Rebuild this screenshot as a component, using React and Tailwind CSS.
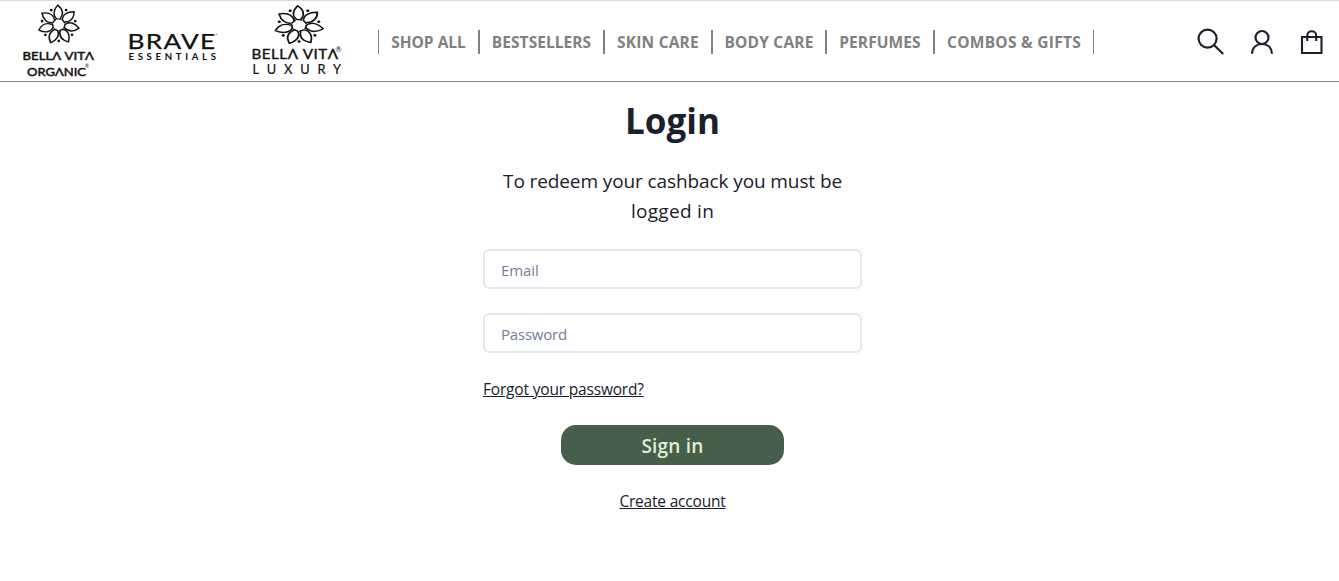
import React from "react";

function Flower({ transform }) {
  const angles = [0, 51.43, 102.86, 154.29, 205.71, 257.14, 308.57];
  return (
    <g transform={transform} fill="none" stroke="#111" strokeWidth="1.4" strokeLinejoin="round">
      {angles.map((a) => (
        <g key={a} transform={`rotate(${a})`}>
          <path d="M2.6 -5.6L-1.6 -5.8C-5.8 -9 -5.2 -14.6 -1 -19.6C3.9 -15.6 4.8 -10.6 1.4 -6" />
          <circle cx="7" cy="-14.6" r="1.3" fill="#111" stroke="none" />
        </g>
      ))}
    </g>
  );
}

function OrganicLogo() {
  return (
    <svg width="80" height="80" viewBox="0 0 80 80" fontFamily="Lato, sans-serif" fill="#111">
      <Flower transform="translate(40.7 23.7) scale(1.05 1)" />
      <text x="4.5" y="58.9" fontSize="12.3" stroke="#111" strokeWidth="0.5" textLength="71.5" lengthAdjust="spacingAndGlyphs">BELLΛ VITΛ</text>
      <text x="9" y="75" fontSize="12.3" stroke="#111" strokeWidth="0.5" textLength="59" lengthAdjust="spacingAndGlyphs">ORGΛNIC</text>
      <text x="67" y="67" fontSize="5">®</text>
    </svg>
  );
}

function BraveLogo() {
  return (
    <svg width="94" height="80" viewBox="0 0 94 80" fontFamily="Lato, sans-serif" fill="#111">
      <text x="0.5" y="47.5" fontSize="20.5" letterSpacing="1" stroke="#111" strokeWidth="0.25" textLength="89" lengthAdjust="spacingAndGlyphs">BRAVE</text>
      <text x="1.5" y="58.8" fontSize="9.6" fontWeight="700" textLength="87.5" lengthAdjust="spacing">ESSENTIALS</text>
      <text x="88" y="35" fontSize="3">™</text>
    </svg>
  );
}

function LuxuryLogo() {
  return (
    <svg width="94" height="80" viewBox="0 0 94 80" fontFamily="Lato, sans-serif" fill="#111">
      <Flower transform="translate(49 24.3) scale(1.25 1)" />
      <text x="1.5" y="58.2" fontSize="12.6" letterSpacing="0.4" stroke="#111" strokeWidth="0.35" textLength="87" lengthAdjust="spacingAndGlyphs">BELLΛ VITΛ</text>
      <text x="2.5" y="72.8" fontSize="12.8" stroke="#111" strokeWidth="0.2" textLength="88.5" lengthAdjust="spacing">LUXURY</text>
      <text x="85.5" y="50.5" fontSize="7.5">®</text>
    </svg>
  );
}

function NavItem({ label, className }) {
  return (
    <div className={`flex h-6 items-center justify-center whitespace-nowrap border-[#808080] pt-[2px] ${className}`}>
      <a href="#">{label}</a>
    </div>
  );
}

function Header() {
  return (
    <header className="flex h-[82px] items-start border-b border-b-[#808080] border-t border-t-[#d9d9d9]">
      <div className="flex h-20 w-[378px] pl-[18px]">
        <OrganicLogo />
        <div className="ml-[29px] flex"><BraveLogo /></div>
        <div className="ml-[29px] flex"><LuxuryLogo /></div>
      </div>
      <nav className="mt-[29px] flex text-[15.5px] font-bold text-[#808080]">
        <NavItem label="SHOP ALL" className="w-[102px] border-l border-r-2" />
        <NavItem label="BESTSELLERS" className="w-[125px] border-r-2 tracking-[0.05px]" />
        <NavItem label="SKIN CARE" className="w-[108px] border-r-2 tracking-[0.2px]" />
        <NavItem label="BODY CARE" className="w-[114px] border-r-2 tracking-[0.2px]" />
        <NavItem label="PERFUMES" className="w-[108px] border-r-2 tracking-[0.1px]" />
        <NavItem label="COMBOS & GIFTS" className="w-[159px] border-r tracking-[0.27px]" />
      </nav>
      <div className="ml-auto mt-6 flex pr-[9px]" aria-label="Account tools">
        <svg width="34" height="34" viewBox="0 0 34 34" fill="none" stroke="#1a202c" strokeWidth="2.2">
          <circle cx="12.6" cy="13.6" r="9" />
          <path d="M19.2 20.2L28.2 29" />
        </svg>
        <svg className="ml-[17px]" width="34" height="34" viewBox="0 0 34 34" fill="none" stroke="#1a202c" strokeWidth="2.2">
          <circle cx="16" cy="12.5" r="6.5" />
          <path d="M6 28.7C6.3 22.5 10.5 19 16 19S25.7 22.5 26 28.7" />
        </svg>
        <svg className="ml-[16px]" width="34" height="34" viewBox="0 0 34 34" fill="none" stroke="#1a202c" strokeWidth="2.1">
          <path d="M6 12H25.5V28H6Z M11.3 16V10.5C11.3 4.8 20.2 4.8 20.2 10.5V16" />
        </svg>
      </div>
    </header>
  );
}

export default function App() {
  return (
    <div className="min-h-[581px] bg-white font-['Open_Sans','Noto_Sans',sans-serif] text-[#1a202c]">
      <Header />
      <main className="ml-[483px] flex w-[379px] flex-col items-center">
        <h1 className="mt-[15px] text-[35px] font-bold leading-[48px]">Login</h1>
        <p className="mt-[21px] whitespace-nowrap text-center text-[19px] leading-[30px] tracking-[-0.1px]">
          To redeem your cashback you must be<br /><span className="tracking-[0.3px]">logged in</span>
        </p>
        <input type="email" placeholder="Email" className="mt-[23px] h-10 w-full rounded-[6px] border-2 border-[#e2e8f0] px-4 pt-[2px] text-[15px] tracking-[-0.1px] placeholder:text-[#718096]" />
        <input type="password" placeholder="Password" className="mt-6 h-10 w-full rounded-[6px] border-2 border-[#e2e8f0] px-4 pt-[2px] text-[15px] tracking-[-0.2px] placeholder:text-[#718096]" />
        <a href="#" className="mt-6 self-start text-[15.5px] leading-6 tracking-[-0.18px] underline">Forgot your password?</a>
        <button className="mt-6 h-10 w-[223px] rounded-[15px] bg-[#475e4b] pt-[2px] text-[19px] font-semibold tracking-[0.2px] text-[#e3efd3]">Sign in</button>
        <a href="#" className="mt-6 text-[15.5px] leading-6 tracking-[-0.2px] underline">Create account</a>
      </main>
    </div>
  );
}
